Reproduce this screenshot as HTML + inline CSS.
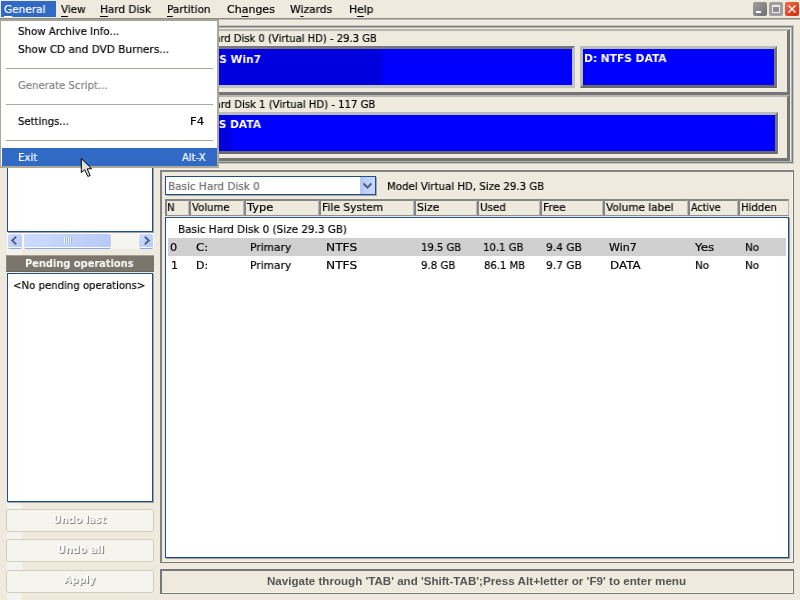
<!DOCTYPE html>
<html>
<head>
<meta charset="utf-8">
<title>Partition Manager</title>
<style>
html,body{margin:0;padding:0;}
body{width:800px;height:600px;overflow:hidden;background:#eeeade;position:relative;
  font-family:"DejaVu Sans","Liberation Sans",sans-serif;font-size:11px;color:#000;-webkit-text-stroke:0.2px currentColor;}
.a{position:absolute;box-sizing:border-box;}
.t{position:absolute;white-space:nowrap;line-height:14px;height:14px;transform-origin:0 0;will-change:transform;}
.b{font-weight:bold;-webkit-text-stroke:0;}
.lb{font-family:"Liberation Sans","DejaVu Sans",sans-serif;}
u{text-decoration:underline;text-decoration-thickness:1px;text-underline-offset:3px;}
.navy{background:#fff;border:1px solid #1f4f85;}
.part{background:#0000ff;border:3px solid;border-color:#bcbcb8 #757575 #6a6a6a #bcbcb8;box-shadow:1px 1px 0 #f5f2e7;}
.part.sunk{border-color:#77777a #c2c2be #c2c2be #77777a;box-shadow:none;}
.rowf{border:solid;border-width:2px 3px 3px 2px;border-color:#b6b6b2 #757575 #757575 #b6b6b2;}
.hd{top:199px;height:17px;border:solid;border-width:2px 1px 1px 2px;border-color:#858583 #b9b7ad #8f8f8b #858583;}
.btn{left:6px;width:148px;height:23px;border:1px solid #d3cdb9;border-radius:3px;background:#f5f4ef;}
.sep{left:6px;width:207px;height:1px;background:#aca899;}
.sb{top:234px;height:13px;border-radius:2px;background:linear-gradient(135deg,#cddcff,#b6c9f6);box-shadow:0 0 0 1px #fbfcff, 0 2px 0 0 #86a8e6;}
</style>
</head>
<body>
<!-- menu bar -->
<div class="a" style="left:0;top:18px;width:800px;height:1px;background:#8d8b84;"></div>
<div class="a" style="left:0;top:19px;width:800px;height:1px;background:#bcb9ae;"></div>
<div class="a" style="left:1px;top:1px;width:55px;height:16px;background:#316ac5;"></div>
<!-- window buttons -->
<div class="a" style="left:753px;top:2px;width:14px;height:14px;border-radius:2px;background:linear-gradient(135deg,#a0a0a0,#6e6e6e);"></div>
<div class="a" style="left:756px;top:11px;width:5px;height:2px;background:#fff;"></div>
<div class="a" style="left:769px;top:2px;width:14px;height:14px;border-radius:2px;background:#9f9f9f;"></div>
<div class="a" style="left:772px;top:5px;width:8px;height:8px;border:1px solid #ececec;border-top-width:2px;background:#8c8c8c;"></div>
<div class="a" style="left:785px;top:2px;width:14px;height:14px;border-radius:2px;background:linear-gradient(135deg,#f06a4c,#d22c0a);"></div>
<svg class="a" style="left:785px;top:2px" width="14" height="14" viewBox="0 0 14 14"><path d="M3.5 3.5 L10.5 10.5 M10.5 3.5 L3.5 10.5" stroke="#fff" stroke-width="1.4" fill="none"/></svg>

<!-- light strip on the left -->
<div class="a" style="left:7px;top:20px;width:15px;height:580px;background:#f4f3ef;"></div>

<!-- disk map -->
<div class="a" style="left:160px;top:25px;width:634px;height:139px;border:1px solid #c6c6c6;box-shadow:inset 0 0 0 1px #7c7c7c, inset 0 0 0 2px #b4b3ac;"></div>
<div class="a rowf" style="left:164px;top:29px;width:626px;height:66px;"></div>
<div class="a rowf" style="left:164px;top:95px;width:626px;height:66px;"></div>
<div class="a part sunk" style="left:170px;top:46px;width:405px;height:42px;"><div class="a" style="left:0;top:0;width:210px;height:36px;background:#0000de;"></div></div>
<div class="a part" style="left:580px;top:46px;width:197px;height:42px;"><div class="a" style="left:0;top:0;width:2px;height:36px;background:#0000de;"></div></div>
<div class="a part" style="left:170px;top:112px;width:608px;height:42px;"><div class="a" style="left:0;top:0;width:58px;height:36px;background:#0000de;"></div></div>

<!-- left pane -->
<div class="a navy" style="left:7px;top:26px;width:146px;height:206px;box-shadow:1px 1px 0 #a2a2a0;"></div>
<div class="a" style="left:7px;top:233px;width:147px;height:16px;background:#f5f4f0;"></div>
<div class="a sb" style="left:8px;width:14px;"></div>
<div class="a sb" style="left:24px;width:87px;"></div>
<div class="a sb" style="left:139px;width:14px;"></div>
<svg class="a" style="left:0px;top:233px" width="160" height="16" viewBox="0 233 160 16">
 <path d="M16.2 236.6 L12.2 240.5 L16.2 244.4" stroke="#4d6185" stroke-width="2" fill="none"/>
 <path d="M144.8 236.6 L148.8 240.5 L144.8 244.4" stroke="#4d6185" stroke-width="2" fill="none"/>
 <path d="M64.5 237v7 M66.5 237v7 M68.5 237v7 M70.5 237v7" stroke="#f2f6ff" stroke-width="1" fill="none"/>
 <path d="M65.5 237v7 M67.5 237v7 M69.5 237v7 M71.5 237v7" stroke="#9db6ee" stroke-width="1" fill="none"/>
</svg>
<div class="a" style="left:6px;top:255px;width:148px;height:17px;background:#7b766b;border-top:1px solid #a29f94;border-left:1px solid #8e8a80;border-bottom:1px solid #6a665c;"></div>
<div class="a navy" style="left:7px;top:273px;width:146px;height:229px;box-shadow:1px 1px 0 #a2a2a0;"></div>
<div class="a btn" style="top:509px"></div>
<div class="a btn" style="top:539px"></div>
<div class="a btn" style="top:570px"></div>

<!-- right pane -->
<div class="a" style="left:160px;top:170px;width:634px;height:393px;border:1px solid #757575;border-width:2px 1px 1px 2px;border-color:#838383 #757575 #757575 #838383;box-shadow:inset -1px -1px 0 #f8f5e9;"></div>
<div class="a navy" style="left:165px;top:176px;width:211px;height:19px;box-shadow:1px 1px 0 #a8a8a8;"></div>
<div class="a" style="left:360px;top:177px;width:15px;height:17px;background:linear-gradient(90deg,#b3c6f6,#cbdaff);"></div>
<svg class="a" style="left:360px;top:177px" width="15" height="17" viewBox="0 0 15 17"><path d="M3.5 6.5 L7.5 10.5 L11.5 6.5" stroke="#4d6185" stroke-width="2" fill="none"/></svg>

<div class="a hd" style="left:165px;width:24px"></div>
<div class="a hd" style="left:189px;width:55px"></div>
<div class="a hd" style="left:244px;width:75px"></div>
<div class="a hd" style="left:319px;width:95px"></div>
<div class="a hd" style="left:414px;width:63px"></div>
<div class="a hd" style="left:477px;width:63px"></div>
<div class="a hd" style="left:540px;width:63px"></div>
<div class="a hd" style="left:603px;width:85px"></div>
<div class="a hd" style="left:688px;width:50px"></div>
<div class="a hd" style="left:738px;width:51px"></div>

<div class="a navy" style="left:165px;top:217px;width:624px;height:341px;box-shadow:1px 1px 0 #9c9c9c;"></div>
<div class="a" style="left:168px;top:238px;width:618px;height:18px;background:#d0d0d0;"></div>

<!-- status bar -->
<div class="a" style="left:160px;top:569px;width:634px;height:25px;border:1px solid #777;border-width:2px 1px 1px 2px;box-shadow:inset -1px -1px 0 #f8f5e9;"></div>

<div class="t" style="left:3.66px;top:3px;transform:scaleX(0.9587);color:#fff;"><u>G</u>eneral</div>
<div class="t" style="left:60.96px;top:3px;transform:scaleX(0.9440);"><u>V</u>iew</div>
<div class="t" style="left:100.43px;top:3px;transform:scaleX(0.9557);"><u>H</u>ard Disk</div>
<div class="t" style="left:167.13px;top:3px;transform:scaleX(0.9511);"><u>P</u>artition</div>
<div class="t" style="left:226.94px;top:3px;">Ch<u>a</u>nges</div>
<div class="t" style="left:290.48px;top:3px;transform:scaleX(0.9759);">W<u>i</u>zards</div>
<div class="t" style="left:348.71px;top:3px;transform:scaleX(0.9757);">H<u>e</u>lp</div>
<div class="t" style="left:176.99px;top:32px;transform:scaleX(0.9090);">Basic Hard Disk 0 (Virtual HD) - 29.3 GB</div>
<div class="t" style="left:176.56px;top:98px;transform:scaleX(0.9170);">Basic Hard Disk 1 (Virtual HD) - 117 GB</div>
<div class="t b" style="left:179.84px;top:53px;transform:scaleX(0.9680);color:#fff;">C: NTFS Win7</div>
<div class="t b" style="left:584.12px;top:52px;transform:scaleX(0.9682);color:#fff;">D: NTFS DATA</div>
<div class="t b" style="left:180.27px;top:118px;transform:scaleX(0.9680);color:#fff;">E: NTFS DATA</div>
<div class="t b" style="left:24.89px;top:257px;transform:scaleX(0.8953);color:#fff;">Pending operations</div>
<div class="t" style="left:12.59px;top:279px;transform:scaleX(0.9206);">&lt;No pending operations&gt;</div>
<div class="t" style="left:167.93px;top:180px;transform:scaleX(0.9502);color:#6c6c6c;">Basic Hard Disk 0</div>
<div class="t" style="left:386.65px;top:180px;transform:scaleX(0.9255);">Model Virtual HD, Size 29.3 GB</div>
<div class="t" style="left:166.76px;top:201px;transform:scaleX(0.9200);">N</div>
<div class="t" style="left:192.17px;top:201px;transform:scaleX(0.9142);">Volume</div>
<div class="t" style="left:247.38px;top:201px;transform:scaleX(1.0371);">Type</div>
<div class="t" style="left:321.61px;top:201px;transform:scaleX(0.9711);">File System</div>
<div class="t" style="left:417.24px;top:201px;transform:scaleX(0.9917);">Size</div>
<div class="t" style="left:479.98px;top:201px;transform:scaleX(0.9416);">Used</div>
<div class="t" style="left:542.91px;top:201px;transform:scaleX(0.9728);">Free</div>
<div class="t" style="left:605.86px;top:201px;transform:scaleX(0.9495);">Volume label</div>
<div class="t" style="left:690.89px;top:201px;transform:scaleX(0.8689);">Active</div>
<div class="t" style="left:740.96px;top:201px;transform:scaleX(0.9230);">Hidden</div>
<div class="t" style="left:177.94px;top:223px;transform:scaleX(0.9449);">Basic Hard Disk 0 (Size 29.3 GB)</div>
<div class="t" style="left:169.72px;top:241px;transform:scaleX(1.0258);">0</div>
<div class="t" style="left:196.28px;top:241px;transform:scaleX(1.0902);">C:</div>
<div class="t" style="left:250.31px;top:241px;transform:scaleX(0.9694);">Primary</div>
<div class="t" style="left:325.79px;top:241px;transform:scaleX(1.1095);">NTFS</div>
<div class="t" style="left:420.52px;top:241px;transform:scaleX(0.9114);">19.5 GB</div>
<div class="t" style="left:483.21px;top:241px;transform:scaleX(0.9186);">10.1 GB</div>
<div class="t" style="left:546.09px;top:241px;transform:scaleX(0.9666);">9.4 GB</div>
<div class="t" style="left:609.47px;top:241px;">Win7</div>
<div class="t" style="left:694.56px;top:241px;transform:scaleX(1.0803);">Yes</div>
<div class="t" style="left:744.64px;top:241px;transform:scaleX(0.9422);">No</div>
<div class="t" style="left:170.69px;top:259px;transform:scaleX(0.9329);">1</div>
<div class="t" style="left:196.11px;top:259px;transform:scaleX(0.9778);">D:</div>
<div class="t" style="left:250.31px;top:259px;transform:scaleX(0.9694);">Primary</div>
<div class="t" style="left:325.79px;top:259px;transform:scaleX(1.1095);">NTFS</div>
<div class="t" style="left:420.52px;top:259px;transform:scaleX(0.9273);">9.8 GB</div>
<div class="t" style="left:483.80px;top:259px;transform:scaleX(0.9115);">86.1 MB</div>
<div class="t" style="left:546.09px;top:259px;transform:scaleX(0.9666);">9.7 GB</div>
<div class="t" style="left:609.51px;top:259px;transform:scaleX(1.0821);">DATA</div>
<div class="t" style="left:694.64px;top:259px;transform:scaleX(0.9422);">No</div>
<div class="t" style="left:744.64px;top:259px;transform:scaleX(0.9422);">No</div>
<div class="t b" style="left:52.79px;top:513px;transform:scaleX(0.8967);color:#fff;text-shadow:1px 1px 0 #7d7d78;">Undo last</div>
<div class="t b" style="left:56.77px;top:543px;transform:scaleX(0.9205);color:#fff;text-shadow:1px 1px 0 #7d7d78;">Undo all</div>
<div class="t b" style="left:64.02px;top:573px;transform:scaleX(0.8907);color:#fff;text-shadow:1px 1px 0 #7d7d78;">Apply</div>
<div class="t b lb" style="left:266.83px;top:574px;transform:scaleX(1.0532);color:#555;">Navigate through 'TAB' and 'Shift-TAB';</div>
<div class="t b lb" style="left:483.42px;top:574px;transform:scaleX(1.0603);color:#555;">Press Alt+letter or 'F9' to enter menu</div>

<!-- popup menu -->
<div class="a" style="left:0;top:19px;width:219px;height:149px;background:#fff;border:1px solid #aca899;border-width:2px 2px 2px 1px;border-color:#a5a296 #aca899 #aca899 #aca899;"></div>
<div class="a sep" style="top:68px"></div>
<div class="a sep" style="top:104px"></div>
<div class="a sep" style="top:140px"></div>
<div class="a" style="left:2px;top:148px;width:215px;height:18px;background:#316ac5;"></div>
<div class="t" style="left:18.19px;top:25px;transform:scaleX(0.9280);">Show Archive Info...</div>
<div class="t" style="left:18.17px;top:43px;transform:scaleX(0.9570);">Show CD and DVD Burners...</div>
<div class="t" style="left:17.59px;top:79px;transform:scaleX(0.9210);color:#808080;">Generate Script...</div>
<div class="t" style="left:18.20px;top:115px;transform:scaleX(0.9152);">Settings...</div>
<div class="t" style="left:190.34px;top:115px;transform:scaleX(1.0526);">F4</div>
<div class="t" style="left:18.05px;top:151px;transform:scaleX(0.9261);color:#fff;">Exit</div>
<div class="t" style="left:181.77px;top:151px;transform:scaleX(0.9200);color:#fff;">Alt-X</div>

<!-- mouse cursor -->
<svg class="a" style="left:80px;top:157px" width="14" height="22" viewBox="-1 -1 14 22"><path d="M0.3 0.5 L0.3 14.6 L3.6 11.7 L6.8 18.4 L9.2 17.6 L6.2 10.9 L10.6 10.7 Z" fill="#dedede" stroke="#000" stroke-width="1"/></svg>
</body>
</html>
